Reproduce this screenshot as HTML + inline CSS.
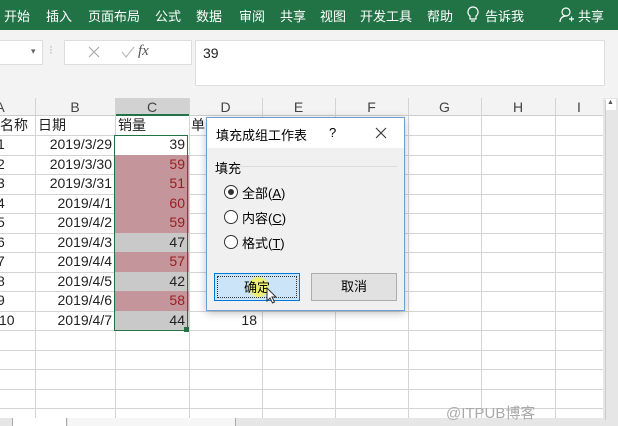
<!DOCTYPE html>
<html><head><meta charset="utf-8"><style>
*{margin:0;padding:0;box-sizing:border-box}
body{width:618px;height:426px;overflow:hidden;position:relative;background:#fff;font-family:"Liberation Sans","Noto Sans CJK SC",sans-serif}
.abs{position:absolute}
#rib{left:0;top:0;width:618px;height:30px;background:#217346;color:#fff;font-size:13px}
#rib span{position:absolute;top:6px}
#fb{left:0;top:30px;width:618px;height:68px;background:#f3f3f3}
.cell{position:absolute;font-size:14px;color:#222;height:19.5px;line-height:19.5px}
.r{text-align:right}
.vl{position:absolute;top:98px;width:1px;height:320px;background:#d4d4d4}
.hl{position:absolute;left:0;width:603px;height:1px;background:#d4d4d4}
.ch{position:absolute;top:98px;height:18px;line-height:18px;text-align:center;font-size:14px;color:#444}
</style></head><body>
<div id="rib" class="abs">
<span style="left:4px">开始</span><span style="left:46px">插入</span><span style="left:88px">页面布局</span><span style="left:155px">公式</span><span style="left:196px">数据</span><span style="left:239px">审阅</span><span style="left:280px">共享</span><span style="left:320px">视图</span><span style="left:360px">开发工具</span><span style="left:427px">帮助</span>
<svg class="abs" style="left:467px;top:6px" width="12" height="17" viewBox="0 0 12 17"><path d="M6 1a5 5 0 0 0-3 9v3h6v-3a5 5 0 0 0-3-9zM4 15h4" stroke="#fff" fill="none" stroke-width="1.2"/></svg>
<span style="left:485px">告诉我</span>
<svg class="abs" style="left:559px;top:7px" width="16" height="16" viewBox="0 0 16 16"><circle cx="7" cy="5" r="4" stroke="#fff" fill="none" stroke-width="1.2"/><path d="M1 15c0-4 3-6 6-6M10 12h5M12.5 9.5v5" stroke="#fff" fill="none" stroke-width="1.2"/></svg>
<span style="left:578px">共享</span>
</div>
<div id="fb" class="abs"></div>
<div class="abs" style="left:0;top:40px;width:43px;height:25px;background:#fff;border:1px solid #ddd;border-left:none"></div>
<div class="abs" style="left:31px;top:46px;font-size:9px;color:#666">▾</div>
<div class="abs" style="left:49px;top:43px;font-size:12px;color:#bbb">⁝</div>
<div class="abs" style="left:64px;top:40px;width:128px;height:25px;background:#fff;border:1px solid #ddd"></div>
<svg class="abs" style="left:88px;top:46px" width="12" height="12" viewBox="0 0 12 12"><path d="M1 1l10 10M11 1L1 11" stroke="#aaa" stroke-width="1.2"/></svg>
<svg class="abs" style="left:121px;top:46px" width="14" height="12" viewBox="0 0 14 12"><path d="M1 6l4 5 8-10" stroke="#bbb" fill="none" stroke-width="1.2"/></svg>
<div class="abs" style="left:138px;top:43px;font-size:15px;color:#555;font-family:'Liberation Serif',serif;font-style:italic">fx</div>
<div class="abs" style="left:195px;top:40px;width:410px;height:46px;background:#fff;border:1px solid #ddd"></div>
<div class="abs" style="left:203px;top:45px;font-size:14px;color:#222">39</div>
<div class="abs" style="left:0;top:98px;width:603px;height:18px;background:#f3f3f3;border-bottom:1px solid #ccc"></div>
<div class="abs" style="left:115px;top:98px;width:74px;height:18px;background:#d2d2d2;border-bottom:2px solid #217346"></div>
<div class="abs" style="left:603px;top:98px;width:15px;height:328px;background:#e6e6e6"></div>
<div class="abs" style="left:605px;top:99px;width:11px;height:11px;background:#fff;font-size:7px;text-align:center;color:#555">▲</div>
<div class="abs" style="left:605px;top:100px;width:11px;height:320px;border-left:1px solid #ccc"></div>
<div class="ch" style="left:-5px;width:10px">A</div><div class="ch" style="left:35px;width:80px">B</div><div class="ch" style="left:115px;width:74px">C</div><div class="ch" style="left:189px;width:73px">D</div><div class="ch" style="left:262px;width:73px">E</div><div class="ch" style="left:335px;width:73px">F</div><div class="ch" style="left:408px;width:73px">G</div><div class="ch" style="left:481px;width:74px">H</div><div class="ch" style="left:555px;width:48px">I</div>
<div class="vl" style="left:35px"></div><div class="vl" style="left:115px"></div><div class="vl" style="left:189px"></div><div class="vl" style="left:262px"></div><div class="vl" style="left:335px"></div><div class="vl" style="left:408px"></div><div class="vl" style="left:481px"></div><div class="vl" style="left:555px"></div>
<div class="hl" style="top:135px"></div><div class="hl" style="top:155px"></div><div class="hl" style="top:174px"></div><div class="hl" style="top:194px"></div><div class="hl" style="top:213px"></div><div class="hl" style="top:233px"></div><div class="hl" style="top:252px"></div><div class="hl" style="top:272px"></div><div class="hl" style="top:291px"></div><div class="hl" style="top:311px"></div><div class="hl" style="top:330px"></div><div class="hl" style="top:350px"></div><div class="hl" style="top:369px"></div><div class="hl" style="top:389px"></div><div class="hl" style="top:408px"></div>
<div class="cell" style="left:0;top:116px">名称</div><div class="cell" style="left:38px;top:116px">日期</div><div class="cell" style="left:118px;top:116px">销量</div><div class="cell" style="left:191px;top:116px">单</div>
<div class="abs" style="left:115px;top:135px;width:74px;height:195px">
<div style="height:19.5px;background:#fff"></div><div style="height:78px;background:#c4959a"></div><div style="height:19.5px;background:#c9c9c9"></div><div style="height:19.5px;background:#c4959a"></div><div style="height:19.5px;background:#c9c9c9"></div><div style="height:19.5px;background:#c4959a"></div><div style="height:19.5px;background:#c9c9c9"></div></div>
<div class="abs" style="left:114px;top:135px;width:74px;height:196px;border:1.5px solid #217346"></div>
<div class="abs" style="left:184px;top:327px;width:5px;height:5px;background:#217346"></div>
<div class="cell" style="left:-3px;top:135px">1</div><div class="cell" style="left:-3px;top:155px">2</div><div class="cell" style="left:-3px;top:174px">3</div><div class="cell" style="left:-3px;top:194px">4</div><div class="cell" style="left:-3px;top:213px">5</div><div class="cell" style="left:-3px;top:233px">6</div><div class="cell" style="left:-3px;top:252px">7</div><div class="cell" style="left:-3px;top:272px">8</div><div class="cell" style="left:-3px;top:291px">9</div><div class="cell" style="left:-1px;top:311px">10</div>
<div class="cell r" style="left:35px;width:77px;top:135px">2019/3/29</div><div class="cell r" style="left:35px;width:77px;top:155px">2019/3/30</div><div class="cell r" style="left:35px;width:77px;top:174px">2019/3/31</div><div class="cell r" style="left:35px;width:77px;top:194px">2019/4/1</div><div class="cell r" style="left:35px;width:77px;top:213px">2019/4/2</div><div class="cell r" style="left:35px;width:77px;top:233px">2019/4/3</div><div class="cell r" style="left:35px;width:77px;top:252px">2019/4/4</div><div class="cell r" style="left:35px;width:77px;top:272px">2019/4/5</div><div class="cell r" style="left:35px;width:77px;top:291px">2019/4/6</div><div class="cell r" style="left:35px;width:77px;top:311px">2019/4/7</div>
<div class="cell r" style="left:115px;width:70px;top:135px">39</div><div class="cell r" style="left:115px;width:70px;top:155px;color:#9c1c1c">59</div><div class="cell r" style="left:115px;width:70px;top:174px;color:#9c1c1c">51</div><div class="cell r" style="left:115px;width:70px;top:194px;color:#9c1c1c">60</div><div class="cell r" style="left:115px;width:70px;top:213px;color:#9c1c1c">59</div><div class="cell r" style="left:115px;width:70px;top:233px">47</div><div class="cell r" style="left:115px;width:70px;top:252px;color:#9c1c1c">57</div><div class="cell r" style="left:115px;width:70px;top:272px">42</div><div class="cell r" style="left:115px;width:70px;top:291px;color:#9c1c1c">58</div><div class="cell r" style="left:115px;width:70px;top:311px">44</div>
<div class="cell r" style="left:189px;width:68px;top:311px">18</div>
<div class="abs" style="left:206px;top:117px;width:199px;height:194px;background:#f0f0f0;border:1px solid #6d9fd6;box-shadow:0 2px 8px rgba(0,0,0,.25)">
<div style="height:30px;background:#fff;font-size:13px;position:relative"><span style="position:absolute;left:9px;top:7px">填充成组工作表</span><span style="position:absolute;left:122px;top:7px">?</span>
<svg style="position:absolute;left:168px;top:9px" width="12" height="12" viewBox="0 0 12 12"><path d="M1 1l10 10M11 1L1 11" stroke="#333" stroke-width="1.1"/></svg></div>
<div style="position:absolute;left:8px;top:40px;font-size:13px">填充</div>
<div style="position:absolute;left:30px;top:48px;width:160px;height:1px;background:#ddd"></div>
<div style="position:absolute;left:17px;top:67px;width:14px;height:14px;border:1px solid #333;border-radius:50%;background:#fff"><div style="margin:3px;width:6px;height:6px;border-radius:50%;background:#333"></div></div>
<div style="position:absolute;left:35px;top:65px;font-size:13px">全部(<u>A</u>)</div>
<div style="position:absolute;left:17px;top:92px;width:14px;height:14px;border:1px solid #333;border-radius:50%;background:#fff"></div>
<div style="position:absolute;left:35px;top:90px;font-size:13px">内容(<u>C</u>)</div>
<div style="position:absolute;left:17px;top:117px;width:14px;height:14px;border:1px solid #333;border-radius:50%;background:#fff"></div>
<div style="position:absolute;left:35px;top:115px;font-size:13px">格式(<u>T</u>)</div>
<div style="position:absolute;left:7px;top:155px;width:86px;height:28px;background:#cce4f7;border:1px solid #0078d7"><div style="margin:2px;height:22px;border:1px dotted #333;text-align:center;font-size:13px;line-height:21px;background:radial-gradient(circle at 52% 50%,#eef070 0,#eef070 9px,transparent 11px)">确定</div></div>
<div style="position:absolute;left:104px;top:155px;width:86px;height:28px;background:#e1e1e1;border:1px solid #adadad;text-align:center;font-size:13px;line-height:26px">取消</div>
</div>
<svg class="abs" style="left:266px;top:287px" width="12" height="18" viewBox="0 0 12 18"><path d="M1 1v13l3-3 2.5 5 2-1-2.5-5h4z" fill="#fff" stroke="#333" stroke-width="1"/></svg>
<div class="abs" style="left:0;top:418px;width:603px;height:8px;background:#e6e6e6"></div>
<div class="abs" style="left:12px;top:418px;width:55px;height:8px;background:#fff;border-left:1px solid #aaa;border-right:1px solid #aaa"></div>
<div class="abs" style="left:68px;top:418px;width:168px;height:8px;background:#f6f6f6;border-right:1px solid #aaa"></div>
<div class="abs" style="left:446px;top:402px;font-size:15px;color:#aaa">@ITPUB博客</div>
</body></html>
